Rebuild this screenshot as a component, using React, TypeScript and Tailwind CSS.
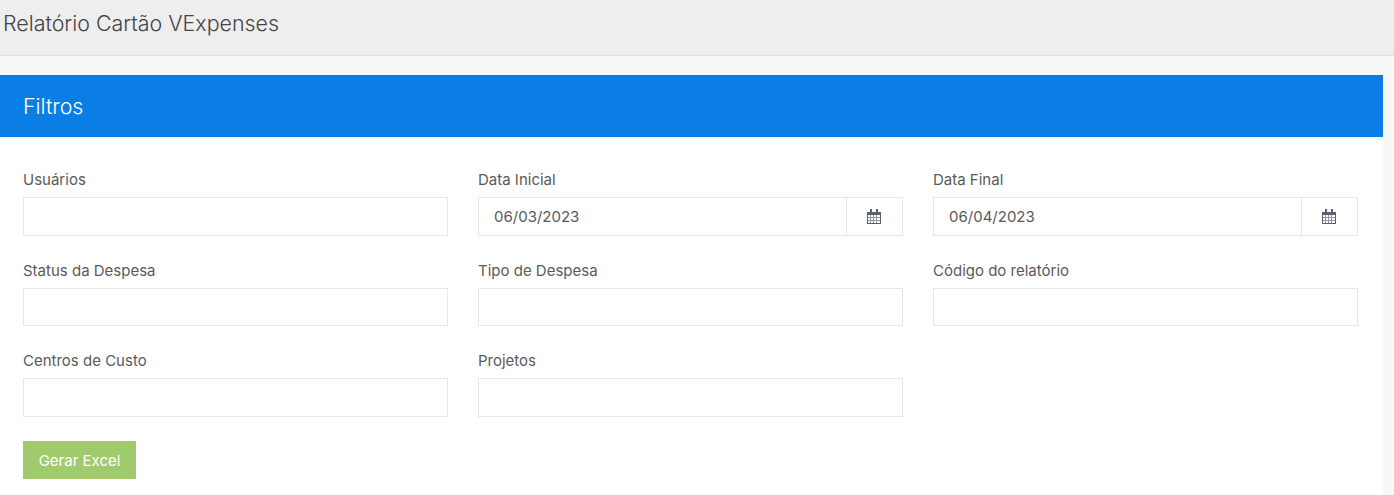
const Calendar = () => (
  <svg width="14" height="15" viewBox="0 0 14 15" className="block" shapeRendering="crispEdges" aria-hidden="true">
    <rect x="0.5" y="3.5" width="13" height="11" fill="#fff" stroke="#5c6170" />
    <rect x="0" y="3" width="14" height="3" fill="#5c6170" />
    <path d="M3.5 6v8M6.5 6v8M9.5 6v8M1 8.5h12M1 11.5h12" stroke="#9297a8" strokeWidth="1" fill="none" />
    <rect x="3" y="0" width="2" height="4" fill="#5c6170" />
    <rect x="9" y="0" width="2" height="4" fill="#5c6170" />
  </svg>
);

const Field = ({ label, h, value, date }: { label: string; h: string; value?: string; date?: boolean }) => (
  <div className="w-[425px] shrink-0">
    <div className="h-[20px] text-[15px] leading-[20px] text-[#5a5a5a]">{label}</div>
    <div className={`mt-[7px] flex ${h} border border-[#e7e7e7] bg-white`}>
      <div className="flex-1 pl-[15px] pt-[1px] flex items-center text-[15px] text-[#5a5a5a]">{value}</div>
      {date && (
        <div className="w-[56px] border-l border-[#e7e7e7] flex items-center justify-center pr-[1px]">
          <Calendar />
        </div>
      )}
    </div>
  </div>
);

export default function App() {
  return (
    <div className="h-[495px] overflow-hidden bg-[#f8f8f8] font-['Inter',sans-serif]">
      <header className="h-[56px] bg-[#eeeeee] border-b border-[#dddddd] pl-[3px] pt-[8px] text-[21.4px] leading-[30px] font-light text-[#444]">
        Relatório Cartão VExpenses
      </header>
      <main className="mt-[19px] w-[1383px] bg-white h-[420px]">
        <div className="h-[62px] bg-[#0a7ee5] pl-[23px] flex items-center text-[21.4px] font-light text-white">Filtros</div>
        <div className="pl-[23px] pt-[33px]">
          <div className="flex gap-[30px]">
            <Field label="Usuários" h="h-[39px]" />
            <Field label="Data Inicial" h="h-[39px]" value="06/03/2023" date />
            <Field label="Data Final" h="h-[39px]" value="06/04/2023" date />
          </div>
          <div className="flex gap-[30px] mt-[25px]">
            <Field label="Status da Despesa" h="h-[38px]" />
            <Field label="Tipo de Despesa" h="h-[38px]" />
            <Field label="Código do relatório" h="h-[38px]" />
          </div>
          <div className="flex gap-[30px] mt-[25px]">
            <Field label="Centros de Custo" h="h-[39px]" />
            <Field label="Projetos" h="h-[39px]" />
          </div>
          <button className="mt-[24px] pt-[2px] block w-[113px] h-[38px] bg-[#a0cb6c] text-white text-[15px]">Gerar Excel</button>
        </div>
      </main>
    </div>
  );
}
